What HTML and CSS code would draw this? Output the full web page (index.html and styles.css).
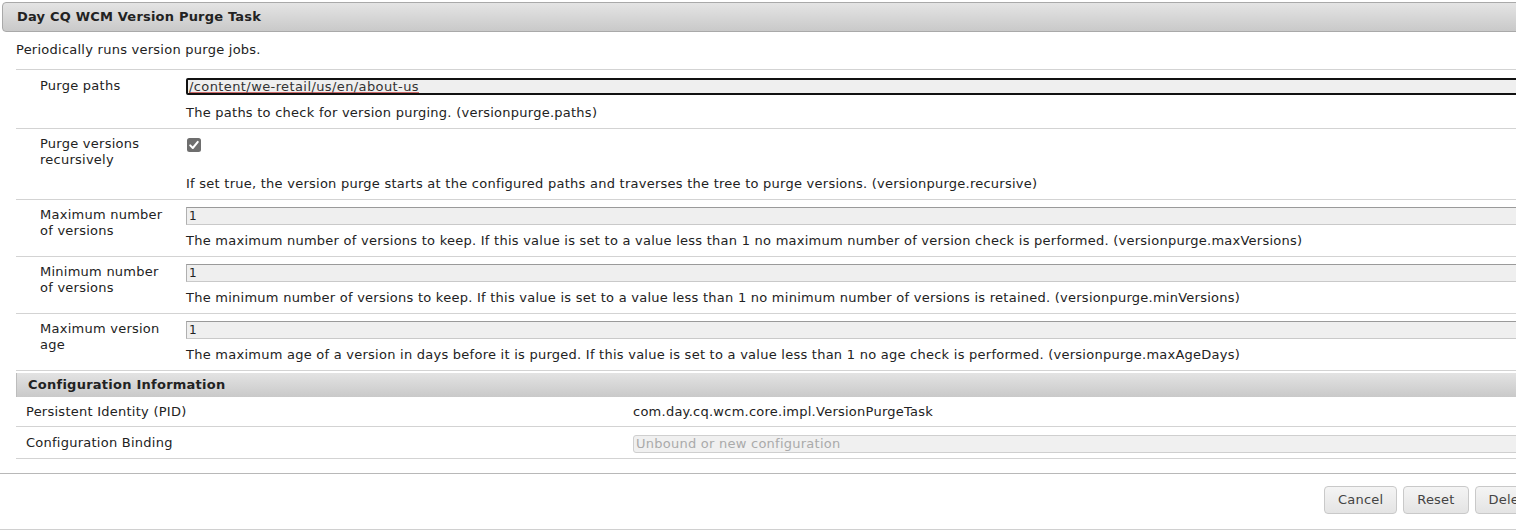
FILE: index.html
```html
<!DOCTYPE html>
<html>
<head>
<meta charset="utf-8">
<link rel="stylesheet" href="styles.css">
</head>
<body>
<div class="page">
  <div class="titlebar">Day CQ WCM Version Purge Task</div>
  <div class="intro">Periodically runs version purge jobs.</div>
  <table class="props">
    <tr>
      <td class="lbl">Purge paths</td>
      <td class="val">
        <div class="field focus"><span class="spell">/content/we-retail/us/en/about-us</span></div>
        <div class="desc">The paths to check for version purging. (versionpurge.paths)</div>
      </td>
    </tr>
    <tr>
      <td class="lbl">Purge versions<br>recursively</td>
      <td class="val">
        <div class="checkrow"><span class="check"><svg width="14" height="14" viewBox="0 0 14 14"><rect x="0" y="0" width="14" height="14" rx="2.5" fill="#6e6e6e"/><path d="M3.2 7.4 L5.8 10 L10.8 3.9" fill="none" stroke="#fff" stroke-width="2" stroke-linecap="round" stroke-linejoin="round"/></svg></span></div>
        <div class="desc">If set true, the version purge starts at the configured paths and traverses the tree to purge versions. (versionpurge.recursive)</div>
      </td>
    </tr>
    <tr>
      <td class="lbl">Maximum number<br>of versions</td>
      <td class="val">
        <div class="field">1</div>
        <div class="desc">The maximum number of versions to keep. If this value is set to a value less than 1 no maximum number of version check is performed. (versionpurge.maxVersions)</div>
      </td>
    </tr>
    <tr>
      <td class="lbl">Minimum number<br>of versions</td>
      <td class="val">
        <div class="field">1</div>
        <div class="desc">The minimum number of versions to keep. If this value is set to a value less than 1 no minimum number of versions is retained. (versionpurge.minVersions)</div>
      </td>
    </tr>
    <tr>
      <td class="lbl">Maximum version<br>age</td>
      <td class="val">
        <div class="field">1</div>
        <div class="desc">The maximum age of a version in days before it is purged. If this value is set to a value less than 1 no age check is performed. (versionpurge.maxAgeDays)</div>
      </td>
    </tr>
  </table>
  <div class="confhead">Configuration Information</div>
  <table class="conf">
    <tr class="pid">
      <td class="clbl">Persistent Identity (PID)</td>
      <td class="cval">com.day.cq.wcm.core.impl.VersionPurgeTask</td>
    </tr>
    <tr class="bind">
      <td class="clbl">Configuration Binding</td>
      <td class="cval"><div class="select">Unbound or new configuration</div></td>
    </tr>
  </table>
  <div class="footer">
    <div class="buttons">
      <span class="btn">Cancel</span>
      <span class="btn">Reset</span>
      <span class="btn">Delete</span>
    </div>
  </div>
</div>
</body>
</html>
```
FILE: styles.css
```css
html, body {
  margin: 0;
  padding: 0;
  background: #fff;
  overflow: hidden;
}
body {
  font-family: "DejaVu Sans", Verdana, sans-serif;
  font-size: 13px;
  letter-spacing: 0.25px;
  color: #222;
}
.page {
  width: 1600px;
  padding-top: 2px;
}
.titlebar {
  margin-left: 2px;
  height: 28px;
  border: 1px solid #a9a9a9;
  border-radius: 4px 0 0 4px;
  background: linear-gradient(#e4e4e4, #c9c9c9);
  font-weight: bold;
  font-size: 13px;
  letter-spacing: 0.2px;
  line-height: 28px;
  padding-left: 14px;
  color: #222;
}
.intro {
  padding: 10px 0 0 16px;
  height: 28px;
  line-height: 16px;
  box-sizing: border-box;
  margin-bottom: 9px;
}
.props {
  margin-left: 16px;
  width: calc(100% - 16px);
  border-collapse: collapse;
}
.props td {
  border-top: 1px solid #d3d3d3;
  vertical-align: top;
  padding: 0;
}
.props tr:last-child td {
  border-bottom: 1px solid #d3d3d3;
}
.lbl {
  width: 146px;
  padding: 7px 0 0 24px !important;
  line-height: 16px;
}
.props tr:first-child .lbl {
  padding-top: 8px !important;
}
.val {
  padding: 7px 0 7px 0 !important;
}
.field {
  height: 16px;
  border: 1px solid #c9c9c9;
  border-top-color: #9a9a9a;
  border-left-color: #b0b0b0;
  background: #efefef;
  line-height: 16px;
  padding-left: 2px;
  font-size: 12px;
  letter-spacing: 0.2px;
  margin-bottom: 8px;
}
.props tr:first-child .val {
  padding-top: 8px !important;
}
.field.focus {
  height: 13px;
  border: 2px solid #111;
  border-radius: 2px;
  line-height: 13px;
  padding-left: 1px;
  margin-bottom: 10px;
  font-size: 13px;
  letter-spacing: 0.4px;
  color: #333;
}
.spell {
  text-decoration: underline;
  text-decoration-color: #c66;
}
.checkrow {
  height: 14px;
  padding: 2px 0 0 1px;
  margin-bottom: 24px;
}
.check svg {
  display: block;
}
.desc {
  line-height: 16px;
  height: 16px;
  white-space: nowrap;
}
.confhead {
  margin: 2px 0 0 16px;
  height: 24px;
  line-height: 24px;
  padding-left: 11px;
  font-weight: bold;
  background: linear-gradient(#e3e3e3, #c9c9c9);
  border-left: 1px solid #bdbdbd;
}
.conf {
  margin-left: 16px;
  width: calc(100% - 16px);
  border-collapse: collapse;
}
.conf td {
  border-bottom: 1px solid #d3d3d3;
  padding: 0;
  vertical-align: middle;
}
.pid td {
  height: 29px;
}
.bind td {
  height: 31px;
}
.clbl {
  width: 607px;
  padding-left: 10px !important;
}
.pid .cval {
  padding-left: 0 !important;
}
.select {
  height: 16px;
  margin-top: 2px;
  border: 1px solid #cfcfcf;
  border-radius: 3px;
  background: #f0f0f0;
  color: #aaa;
  line-height: 16px;
  padding-left: 2px;
}
.footer {
  margin-top: 14px;
  border-top: 1px solid #b8b8b8;
  border-bottom: 1px solid #d0d0d0;
  height: 55px;
}
.buttons {
  display: flex;
  gap: 6px;
  padding: 12px 0 0 1324px;
}
.btn {
  height: 26px;
  line-height: 26px;
  padding: 0 13px;
  border: 1px solid #c9c9c9;
  border-radius: 4px;
  background: linear-gradient(#f4f4f4, #e4e4e4);
  color: #444;
  font-size: 13px;
  letter-spacing: 0.2px;
  white-space: nowrap;
}
```
